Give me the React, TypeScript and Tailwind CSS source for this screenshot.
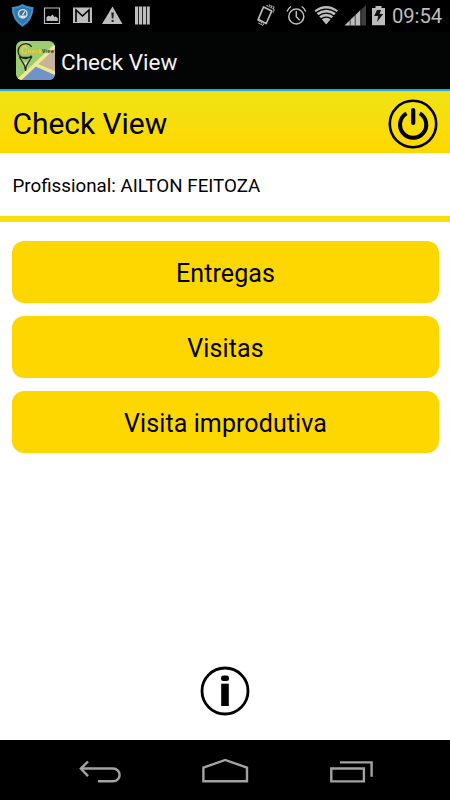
const ACTIONS = ['Entregas', 'Visitas', 'Visita improdutiva'];

function StatusBar() {
  return (
    <div className="flex h-8 items-center justify-between bg-black text-[#bdbdbd]">
      <svg className="h-8 w-40" viewBox="0 0 160 32" fill="currentColor">
        <path d="M22.5 4 Q17 7.300 11.700 7 Q11.500 20 22.500 27 Q33.500 20 33.700 7 Q28 7.300 22.500 4Z" fill="#3f83b8" />
        <path d="M22.500 5.500 Q18 8.300 13.200 8.300 Q13.300 19 22.500 25.200 Q31.700 19 32.200 8.300 Q27 8.300 22.500 5.500Z" fill="#2b79b7" stroke="#65a0ca" strokeWidth="0.700" />
        <circle cx="22.800" cy="13.800" r="4.200" fill="#3a719c" stroke="#d5dce0" strokeWidth="1.400" />
        <path d="M19.500 15.500h6.500l-1.500 2h-3.500z" fill="#e6e6e6" />
        <path d="M22.500 15l2.300-3.500" stroke="#fff" strokeWidth="1.100" />
        <path d="M44.500 8h15v15.500h-15z" fill="none" stroke="currentColor" strokeWidth="1.200" />
        <path d="M46.500 21v-4l2-1.300 2 .7 2-2 2 2.500 1.300-.5 2 1.800V21z" />
        <path d="M73 7.500h19v15.500h-19z" />
        <path d="M76 22V10l6.500 6 6.500-6v12" fill="none" stroke="#000" strokeWidth="1.600" />
        <path d="M112.500 6.500l10 17.500h-20.500z" />
        <path d="M111.300 12.500h2.600l-.5 6h-1.600zM111.600 20h2v2h-2z" fill="#222" />
        <path d="M135 6.500h3.200V24.500H135zM139 6.500h3.200V24.500H139zM143 6.500h3.200V24.500H143zM147 6.500h2.800V24.500H147z" />
      </svg>
      <div className="flex items-center">
        <svg className="h-8 w-[142px]" viewBox="250 0 142 32" fill="currentColor">
          <path d="M263.500 7l8.300 4-5.600 12.500-8-4.200z" fill="none" stroke="currentColor" strokeWidth="1.700" strokeLinejoin="round" />
          <path d="M266.500 5.500l7.800 3.600-1.200 3.400M269 5l6 2.700M257.500 20l6.500 4.500M258.500 23l4.500 2.500" fill="none" stroke="currentColor" strokeWidth="1.200" strokeDasharray="1.500 .7" />
          <circle cx="296.300" cy="16.500" r="7.500" fill="none" stroke="currentColor" strokeWidth="1.500" />
          <path d="M296.300 11v5.700l3.500 3.500M287 11.500q1-3 4-5M305.700 11.500q-1-3-4-5" fill="none" stroke="currentColor" strokeWidth="1.500" />
          <path d="M314.500 10.500Q326 1.700 338 10.500L326.200 24.500z" />
          <path d="M315.500 13Q326.200 5.300 337 13M318 16.200Q326.200 10.200 334.500 16.200M320.500 19.300Q326.200 15 332 19.300" fill="none" stroke="#000" strokeWidth="1.300" />
          <path d="M344.500 25.500l16-15.500V25.500z" />
          <path d="M361.200 9.500L366 5V25.500h-4.800z" fill="#3d3d3d" />
          <path d="M350.200 20v5.500M355.200 15v10.500M360.700 10v15.500" stroke="#333" strokeWidth=".9" />
          <path d="M372 8h3.500V6h6v2h3.500v17.300h-13z" />
          <path d="M377 10h4l-1.300 4h3.500l-6.200 8 1.200-6h-4z" fill="#111" />
        </svg>
        <span className="w-[58px] text-[20.300px] leading-8 tracking-[-0.1px] whitespace-nowrap">09:54</span>
      </div>
    </div>
  );
}

function AppIcon() {
  return (
    <svg className="h-[39px] w-[39px]" viewBox="0 0 39 39">
      <defs>
        <clipPath id="icon-shape">
          <rect width="39" height="39" rx="6" />
        </clipPath>
      </defs>
      <g clipPath="url(#icon-shape)">
        <path d="M0 0h39v39H0z" fill="#9dcc73" />
        <path d="M39 8L23 22l16 9z" fill="#c9b39c" />
        <path d="M5 39l14-14 20 9v5z" fill="#7293ca" />
        <path d="M3 39L39 5" stroke="#f2e98f" strokeWidth="3.500" />
        <path d="M18 23l23 10" stroke="#f2e98f" strokeWidth="3.500" />
        <path d="M3.500 5Q7.500 .8 13 2.300M9.300 21v11M10 21l1 7" fill="none" stroke="#dfead0" strokeWidth="1.100" />
        <path d="M15.700 5.800A7.500 7.500 0 1 0 15.500 14.700M3.200 15.500l5.300 9 1 5.500M16 15.500l-5.500 9-1 5.500M4 16.300h11.500" fill="none" stroke="#23281c" strokeWidth="1.300" />
        <text x="4.500" y="13" fill="#f2cf22" fontSize="10" fontWeight="700">C</text>
        <text x="11.500" y="12" fill="#f6cd1a" fontSize="6" fontWeight="700" textLength="14">heck</text>
        <text x="26" y="12" fill="#303527" fontSize="5" fontWeight="700" textLength="12">View</text>
      </g>
    </svg>
  );
}

function PowerIcon() {
  return (
    <svg className="h-[50px] w-[50px]" viewBox="0 0 50 50" fill="none" stroke="#000">
      <circle cx="25" cy="25" r="23.200" strokeWidth="2.600" />
      <path d="M18.500 14.400A13.100 13.100 0 1 0 31.800 14.400" strokeWidth="4" />
      <path d="M25.200 11v13" strokeWidth="4.200" strokeLinecap="round" />
    </svg>
  );
}

function InfoIcon() {
  return (
    <svg className="h-[50px] w-[50px]" viewBox="0 0 50 50">
      <circle cx="25" cy="25" r="23" fill="none" stroke="#000" strokeWidth="2.800" />
      <rect x="21" y="9.500" width="8" height="5.500" rx="2.500" />
      <path d="M21.200 17.700h7.600V40h-7.600z" />
    </svg>
  );
}

function NavBar() {
  return (
    <div className="h-[60px] bg-black">
      <svg className="h-[60px] w-full" viewBox="0 0 450 60" fill="none" stroke="#a3a3a3" strokeWidth="2.400">
        <path d="M98 41.300h15.200a6.400 6.400 0 0 0 0-12.800H81" />
        <path d="M88 21.500l-7.200 7.100 7.200 7.600" />
        <path d="M203.400 41.300V27.700l21.800-7.800 21.800 7.800v13.600z" />
        <path d="M331.300 28.500h32.600v12.900h-32.600z" />
        <path d="M340 22.400h31.600v14.400" />
      </svg>
    </div>
  );
}

export default function App() {
  return (
    <div className="flex h-[800px] w-[450px] flex-col overflow-hidden bg-white font-[Roboto,sans-serif] text-black">
      <StatusBar />
      <div className="flex h-[59px] items-center border-b-2 border-[#1cabdc] bg-[#030404] pl-4 text-[#f3f3f3]">
        <AppIcon />
        <span className="ml-1.5 pt-0.5 text-[22.500px] leading-8">Check View</span>
      </div>

      <header className="flex h-[62px] items-center justify-between bg-linear-to-b from-[#f0e314] to-[#ffd700] pt-[3px] pr-[12.500px] pl-[12.500px]">
        <h1 className="text-[30px] leading-10 tracking-[-0.050px]">Check View</h1>
        <PowerIcon />
      </header>
      <div className="flex h-[69px] items-center border-b-6 border-[#f8dc0b] pt-0.5 pl-[12.500px]">
        <p className="text-[18.750px] leading-6">Profissional: AILTON FEITOZA</p>
      </div>

      <main className="flex flex-1 flex-col gap-[13px] px-[11.500px] pt-[19px]">
        {ACTIONS.map(label => (
          <button key={label} className="h-[62px] rounded-xl bg-[#ffd700] pt-[3px] pl-px text-[25px] leading-8 tracking-[0.100px]">
            {label}
          </button>
        ))}
      </main>
      <footer className="flex h-[74px] items-start justify-center">
        <InfoIcon />
      </footer>
      <NavBar />
    </div>
  );
}
